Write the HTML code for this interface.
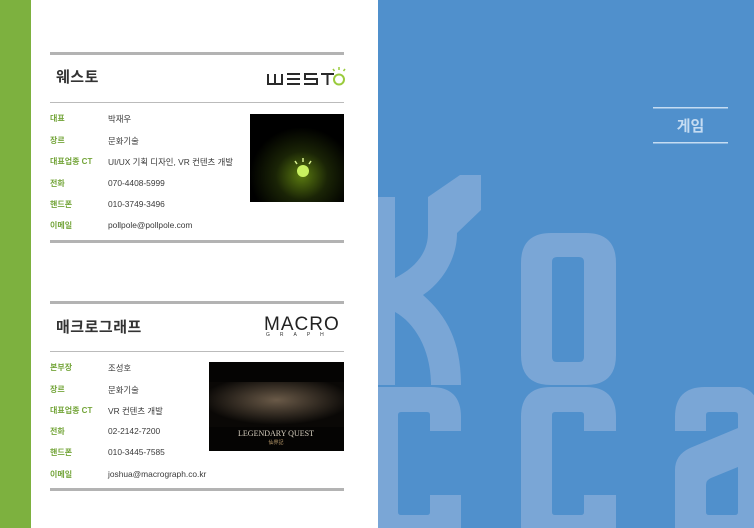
<!DOCTYPE html>
<html><head><meta charset="utf-8"><style>
*{margin:0;padding:0;box-sizing:border-box}
body{width:754px;height:528px;overflow:hidden;position:relative;background:#fff;font-family:"Liberation Sans","Noto Sans CJK KR",sans-serif}
.green{position:absolute;left:0;top:0;width:31px;height:528px;background:#7db13f}
.blue{position:absolute;left:378px;top:0;width:376px;height:528px;background:#5090cc}
.rule{position:absolute;left:50px;width:294px;background:#b3b3b3}
.t{position:absolute;font-size:15px;font-weight:bold;color:#333;letter-spacing:0.5px}
.lab{position:absolute;left:50px;font-size:8px;color:#74a53a;font-weight:bold}
.val{position:absolute;left:108px;font-size:8.4px;color:#3a3a3a}
</style></head><body>
<div class="green"></div>
<div class="blue">
<svg width="376" height="528" viewBox="378 0 376 528" style="position:absolute;left:0;top:0">
<g fill="#7aa6d6">
<path d="M378,197 L395,197 L395,278 C415,268 428,253 428,233 L428,197 L460,175 L481,175 L481,210 L457,233 C457,260 441,283 423,295 C448,317 461,343 461,385 L431,385 C431,350 415,323 395,312 L395,385 L378,385 Z"/>
<path fill-rule="evenodd" d="M551,233 L586,233 Q616,233 616,263 L616,355 Q616,385 586,385 L551,385 Q521,385 521,355 L521,263 Q521,233 551,233 Z M557,257 Q552,257 552,262 L552,357 Q552,362 557,362 L579,362 Q584,362 584,357 L584,262 Q584,257 579,257 Z"/>
<path d="M408,387 L431,387 Q461,387 461,417 L461,431 L430,431 L430,415 Q430,412 427,412 L401,412 Q398,412 398,415 L398,512 Q398,515 401,515 L427,515 Q430,515 430,512 L430,495 L461,495 L461,528 L378,528 L378,387 Z"/>
<path d="M551,387 L586,387 Q616,387 616,417 L616,431 L584,431 L584,415 Q584,412 581,412 L555,412 Q552,412 552,415 L552,512 Q552,515 555,515 L581,515 Q584,515 584,512 L584,495 L616,495 L616,528 L521,528 L521,417 Q521,387 551,387 Z"/>
<path fill-rule="evenodd" d="M705,387 L740,387 Q760,390 760,420 L760,528 L675,528 L675,470 Q675,455 690,448 L738,428 L738,415 Q738,412 735,412 L709,412 Q706,412 706,415 L706,431 L675,431 L675,417 Q675,387 705,387 Z M738,467 L711,478 Q706,480 706,485 L706,512 Q706,515 709,515 L735,515 Q738,515 738,512 Z"/>
</g>
<rect x="653" y="107" width="75" height="1.5" fill="#c5dcf2"/>
<rect x="653" y="142" width="75" height="1.5" fill="#c5dcf2"/>
<text x="690.5" y="131" text-anchor="middle" font-size="15" font-weight="bold" fill="#c5dcf2" font-family="Liberation Sans, Noto Sans CJK KR, sans-serif">게임</text>
</svg>
</div>

<div class="rule" style="top:52px;height:3px"></div>
<div class="t" style="left:56px;top:66px">웨스토</div>
<svg style="position:absolute;left:266px;top:66px" width="80" height="22" viewBox="0 0 80 22">
<g fill="none" stroke="#2a2a2a" stroke-width="2">
<path d="M2,8 L2,18 L16,18 L16,8 M9,8 L9,18"/>
<path d="M34,8 L21,8 M21,13 L34,13 M21,18 L34,18"/>
<path d="M51,8 L39,8 L39,13 L51,13 L51,18 L38,18"/>
<path d="M55,8 L68,8 M61.5,8 L61.5,19"/>
</g>
<circle cx="73" cy="13.5" r="5" fill="none" stroke="#9acb3c" stroke-width="2"/>
<path d="M73,1 L73,4 M67,3 L68.5,5 M79,3 L77.5,5" stroke="#9acb3c" stroke-width="1.5"/>
</svg>
<div class="rule" style="top:102px;height:1px;background:#bbb"></div>
<div class="lab" style="top:113px">대표</div><div class="val" style="top:113px">박재우</div>
<div class="lab" style="top:135px">장르</div><div class="val" style="top:135px">문화기술</div>
<div class="lab" style="top:156px">대표업종 CT</div><div class="val" style="top:156px">UI/UX 기획 디자인, VR 컨텐츠 개발</div>
<div class="lab" style="top:178px">전화</div><div class="val" style="top:178px">070-4408-5999</div>
<div class="lab" style="top:199px">핸드폰</div><div class="val" style="top:199px">010-3749-3496</div>
<div class="lab" style="top:220px">이메일</div><div class="val" style="top:220px">pollpole@pollpole.com</div>
<svg style="position:absolute;left:250px;top:114px" width="94" height="88">
<defs><radialGradient id="g1" cx="0.55" cy="0.7" r="0.55"><stop offset="0" stop-color="#5a7a10"/><stop offset="0.5" stop-color="#1a2406"/><stop offset="1" stop-color="#000"/></radialGradient></defs>
<rect width="94" height="88" fill="url(#g1)"/>
<circle cx="53" cy="57" r="6" fill="#c8f060"/>
<path d="M53,44 L53,48 M45,47 L47,50 M61,47 L59,50" stroke="#d8f090" stroke-width="1.5"/>
</svg>
<div class="rule" style="top:240px;height:3px"></div>

<div class="rule" style="top:301px;height:3px"></div>
<div class="t" style="left:56px;top:316px">매크로그래프</div>
<div style="position:absolute;left:264px;top:314px;font-size:19px;color:#222;letter-spacing:1px;font-family:'Liberation Sans',sans-serif">MACRO</div>
<div style="position:absolute;left:266px;top:332px;font-size:5px;color:#333;letter-spacing:10px">GRAPH</div>
<div class="rule" style="top:351px;height:1px;background:#bbb"></div>
<div class="lab" style="top:362px">본부장</div><div class="val" style="top:362px">조성호</div>
<div class="lab" style="top:384px">장르</div><div class="val" style="top:384px">문화기술</div>
<div class="lab" style="top:405px">대표업종 CT</div><div class="val" style="top:405px">VR 컨텐츠 개발</div>
<div class="lab" style="top:426px">전화</div><div class="val" style="top:426px">02-2142-7200</div>
<div class="lab" style="top:447px">핸드폰</div><div class="val" style="top:447px">010-3445-7585</div>
<div class="lab" style="top:469px">이메일</div><div class="val" style="top:469px">joshua@macrograph.co.kr</div>
<svg style="position:absolute;left:209px;top:362px" width="135" height="89">
<defs><radialGradient id="g2" cx="0.5" cy="0.4" r="0.55"><stop offset="0" stop-color="#6a5a48"/><stop offset="1" stop-color="#0a0806"/></radialGradient></defs>
<rect width="135" height="89" fill="#050403"/>
<rect x="0" y="20" width="135" height="45" fill="url(#g2)"/>
<text x="67" y="74" text-anchor="middle" font-size="8" fill="#d8d0c0" font-family="Liberation Serif,serif">LEGENDARY QUEST</text>
<text x="67" y="82" text-anchor="middle" font-size="5" fill="#c0a070">仙界記</text>
</svg>
<div class="rule" style="top:488px;height:3px"></div>
</body></html>
